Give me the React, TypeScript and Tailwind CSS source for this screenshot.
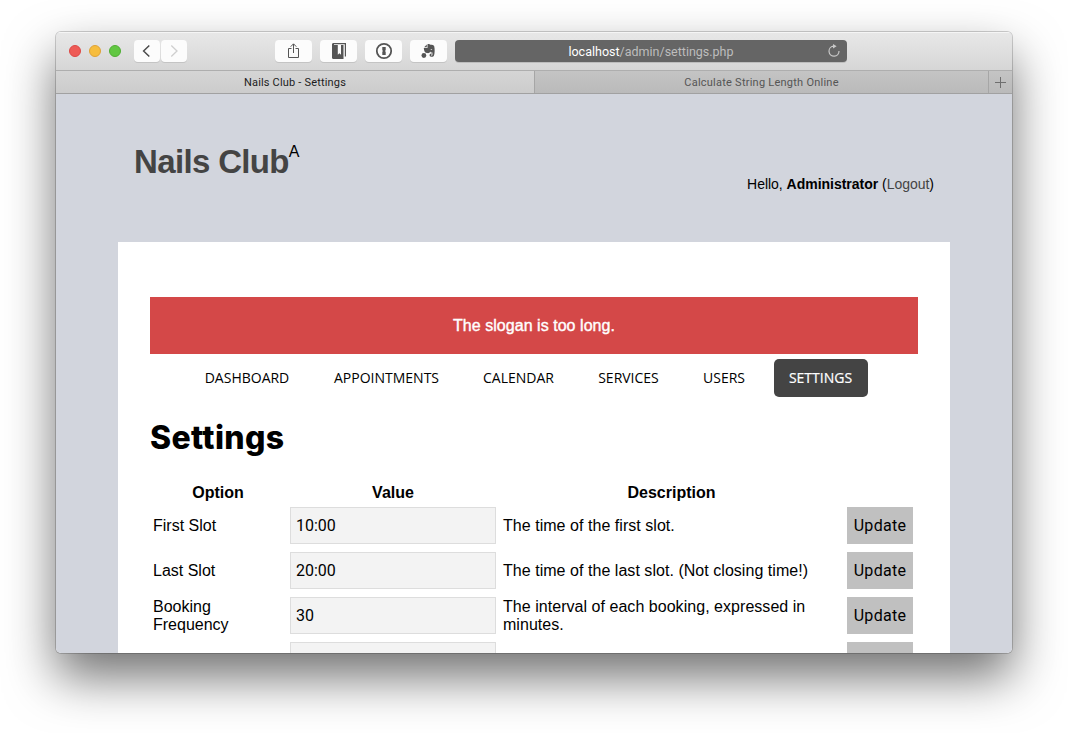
import type { ReactNode } from "react";

const navItems = [
  { label: "DASHBOARD", box: "w-[114px] mr-[15px]" },
  { label: "APPOINTMENTS", box: "w-[135px] mr-[14px]" },
  { label: "CALENDAR", box: "w-[101px] mr-[14px]" },
  { label: "SERVICES", box: "w-[91px] mr-[14px]" },
  { label: "USERS", box: "w-[72px] mr-[14px]" },
  { label: "SETTINGS", box: "w-[94px] pr-px rounded-[5px] bg-[#444444] text-white [-webkit-text-stroke:0.200px_white]" },
];

const options = [
  { name: "First Slot", value: "10:00", description: "The time of the first slot.", action: "Update" },
  { name: "Last Slot", value: "20:00", description: "The time of the last slot. (Not closing time!)", action: "Update" },
  {
    name: "Booking Frequency",
    value: "30",
    description: "The interval of each booking, expressed in minutes.",
    action: "Update",
  },
  { name: "", value: "", description: "", action: "" },
];

function ToolButton({ children }: { children: ReactNode }) {
  return (
    <button className="flex h-[22px] w-[37px] items-center justify-center rounded-[4px] bg-[#fcfcfc] shadow-[0_1px_0_#c4c4c4]">
      {children}
    </button>
  );
}

function ShareIcon() {
  return (
    <svg width="14" height="18" viewBox="0 0 14 18" fill="none" stroke="#555" strokeWidth="1">
      <path d="M4.5 6.5h-3v9h10v-9h-3M6.5 11V2M3.7 4.7 6.5 1.8l2.8 2.9" />
    </svg>
  );
}

function BookIcon() {
  return (
    <svg width="16" height="16" viewBox="0 0 16 16">
      <path d="M2.500 0H15v13.500h-1.200V1.200H3v.8h9.500V16H2.200C1.400 16 1 15.500 1 14.800V1.500C1 .6 1.600 0 2.500 0z" fill="#555" />
      <path d="M6.800 2h3.200v9.800L8.400 10.300 6.800 11.800z" fill="#fcfcfc" />
    </svg>
  );
}

function KeyholeIcon() {
  return (
    <svg width="18" height="18" viewBox="0 0 18 18">
      <circle cx="9" cy="9" r="7.200" fill="none" stroke="#555" strokeWidth="1.800" />
      <path d="M7.300 5h3.400v3.300l-.8.7.8.8V13H7.300V9.700L8 9l-.7-.8z" fill="#555" />
    </svg>
  );
}

function ElephantIcon() {
  return (
    <svg width="16" height="16" viewBox="0 0 16 16" fill="#555" className="-translate-x-px">
      <circle cx="3.900" cy="12.500" r="2.400" />
      <path d="M4.200 4.200 6.800 1.600v2.600zM7.500 1.300c1-.5 2.300-.3 3 .5 1.600 0 3.300.4 3.700 1.400.7 2.600.6 6.800-.2 9.400-.4 1.600-4 1.700-4.400-.2-.2-1.300.9-2.200 2.300-1.900v1c-.8 0-1.100.3-.9.7.3.5 1.300.4 1.400-.3V9.400c-1.300.2-1.800-.2-2.200-.9-.3 1.400-1.500 1.800-3 1.600C5 9.900 3.900 8 3.800 4.900h3.700z" />
      <path d="M10.500 6.800c.2-1 1.400-1 1.800.2-.7-.2-1.200-.2-1.800-.2z" fill="#fcfcfc" />
    </svg>
  );
}

function Toolbar() {
  return (
    <div className="flex h-[39px] border-b border-[#aeaeae] bg-linear-to-b from-[#e8e8e8] to-[#d6d6d6] pt-[8px] shadow-[inset_0_1px_0_#f5f5f5]">
      <div className="ml-[13px] mt-[5px] flex gap-[8px]">
        <span className="size-[12px] rounded-full border border-[#dd4845] bg-[#ee5b56]" />
        <span className="size-[12px] rounded-full border border-[#dfa236] bg-[#f6bd3e]" />
        <span className="size-[12px] rounded-full border border-[#4fae33] bg-[#61c742]" />
      </div>
      <div className="ml-[13px] flex h-[22px] gap-px">
        <button className="flex w-[26px] items-center justify-center rounded-[4px] bg-[#fcfcfc] shadow-[0_1px_0_#c4c4c4]">
          <svg width="10" height="14" viewBox="0 0 10 14" fill="none" stroke="#4c4c4c" strokeWidth="1.500">
            <path d="M7.300 1.500 1.600 7l5.700 5.500" />
          </svg>
        </button>
        <button className="flex w-[26px] items-center justify-center rounded-[4px] bg-[#fcfcfc] shadow-[0_1px_0_#c4c4c4]">
          <svg width="10" height="14" viewBox="0 0 10 14" fill="none" stroke="#cfcfcf" strokeWidth="1.300">
            <path d="M2.300 1.500 8 7l-5.700 5.500" />
          </svg>
        </button>
      </div>
      <div className="ml-[88px] flex gap-[8px]">
        <ToolButton><ShareIcon /></ToolButton>
        <ToolButton><BookIcon /></ToolButton>
        <ToolButton><KeyholeIcon /></ToolButton>
        <ToolButton><ElephantIcon /></ToolButton>
      </div>
      <div className="ml-[8px] flex h-[22px] w-[392px] items-center rounded-[4px] bg-[#656565] shadow-[0_1px_0_#bdbdbd]">
        <div className="w-[373px] whitespace-nowrap pl-[19px] pt-[2px] text-center font-['Roboto',sans-serif] text-[12.500px] text-[#bdbdbd]">
          <span className="text-white">localhost</span>/admin/settings.php
        </div>
        <svg width="14" height="14" viewBox="0 0 14 14" fill="none" stroke="#c9c9c9" strokeWidth="1.200" className="-translate-x-px">
          <path d="M6.300 2.200A5 5 0 1 0 12 7" />
          <path d="M6 0v4.600L9.600 2.300z" fill="#c9c9c9" stroke="none" />
        </svg>
      </div>
    </div>
  );
}

function TabBar() {
  return (
    <div className="flex h-[23px] border-b border-[#a1a1a1] text-center font-['Roboto',sans-serif] text-[11px] leading-[23px]">
      <div className="w-[478px] bg-linear-to-b from-[#d5d5d5] to-[#cccccc] tracking-[0.180px] text-[#1d1d1d]">
        Nails Club - Settings
      </div>
      <div className="w-[455px] border-x border-[#a6a6a6] bg-linear-to-b from-[#c4c4c4] to-[#bababa] tracking-[0.240px] text-[#555555]">
        Calculate String Length Online
      </div>
      <div className="flex flex-1 items-center justify-center bg-linear-to-b from-[#c4c4c4] to-[#bababa]">
        <svg width="11" height="11" viewBox="0 0 11 11" stroke="#6e6e6e" strokeWidth="1">
          <path d="M0 5.500h11M5.500 0v11" />
        </svg>
      </div>
    </div>
  );
}

function SettingsTable() {
  return (
    <div className="ml-[3px] mt-[25px] text-[16px] leading-[18px]">
      <div className="grid h-[22px] grid-cols-[130px_206px_337px_66px] gap-x-[7px] text-center font-bold">
        <span>Option</span>
        <span>Value</span>
        <span>Description</span>
      </div>
      <div className="mt-px flex flex-col gap-[8px]">
        {options.map((option, i) => (
          <div key={i} className="grid h-[37px] grid-cols-[130px_206px_337px_66px] items-center gap-x-[7px]">
            <span className="w-[100px]">{option.name}</span>
            <div className="flex h-[37px] items-center border border-[#dddddd] bg-[#f3f3f3] pl-[5px] font-['Roboto',sans-serif]">
              {option.value}
            </div>
            <span className="tracking-[0.040px]">{option.description}</span>
            <button className="h-[37px] bg-[#c0c0c0] font-['Roboto',sans-serif] tracking-[0.300px]">
              {option.action}
            </button>
          </div>
        ))}
      </div>
    </div>
  );
}

export default function App() {
  return (
    <div className="h-[733px] w-[1068px] overflow-hidden bg-white pl-[56px] pt-[32px] font-['Liberation_Sans',sans-serif] text-black">
      <div className="h-[621px] w-[956px] rounded-[5px] shadow-[0_0_0_1px_rgba(0,0,0,0.18),0_24px_50px_rgba(0,0,0,0.56)]">
        <div className="flex h-full flex-col overflow-hidden rounded-[5px] bg-[#d2d5dd]">
          <div className="shrink-0">
            <Toolbar />
            <TabBar />
          </div>
          <div className="flex h-[148px] shrink-0 justify-between px-[78px]">
            <div className="flex pt-[48px]">
              <h1 className="text-[33px] font-bold leading-[40px] tracking-[-0.650px] text-[#444444]">Nails Club</h1>
              <span className="text-[16px] leading-[20px]">A</span>
            </div>
            <p className="pt-[81px] text-[14px] leading-[18px] tracking-[-0.020px]">
              Hello, <b>Administrator</b> (<span className="text-[#444444]">Logout</span>)
            </p>
          </div>
          <main className="mx-[62px] h-[500px] shrink-0 bg-white px-[32px] pt-[55px]">
            <div className="flex h-[57px] items-center justify-center bg-[#d44848] text-[16px] tracking-[0.040px] text-white [-webkit-text-stroke:0.400px_white]">
              The slogan is too long.
            </div>
            <nav className="ml-[40px] mt-[5px] flex h-[38px] font-['Open_Sans',sans-serif] text-[14px] leading-[38px]">
              {navItems.map((item) => (
                <a key={item.label} className={`flex shrink-0 justify-center whitespace-nowrap ${item.box}`}>
                  {item.label}
                </a>
              ))}
            </nav>
            <h2 className="mt-[20px] font-['Inter',sans-serif] text-[32px] font-extrabold leading-[42px] tracking-[0.350px]">
              Settings
            </h2>
            <SettingsTable />
          </main>
        </div>
      </div>
    </div>
  );
}
